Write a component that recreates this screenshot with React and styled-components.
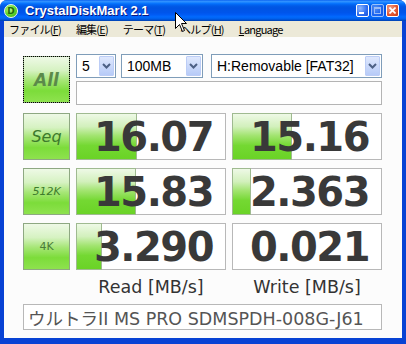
import React from 'react';
import styled, { createGlobalStyle } from 'styled-components';

const GlobalStyle = createGlobalStyle`
  html, body {
    margin: 0;
    padding: 0;
    background: #fff;
  }
  body {
    width: 406px;
    height: 344px;
    overflow: hidden;
    font-family: "DejaVu Sans", "Noto Sans CJK JP", sans-serif;
  }
`;

const Window = styled.div`
  position: relative;
  width: 406px;
  height: 344px;
  display: flex;
  flex-direction: column;
  background: #0842d4;
  border-radius: 7px 7px 0 0;
  overflow: hidden;
`;

const TitleBar = styled.div`
  height: 21px;
  flex: none;
  display: flex;
  align-items: center;
  padding: 0 7px 0 4px;
  background: linear-gradient(#0058ee 0%, #3593ff 5%, #288eff 9%, #127dff 14%, #036ffc 18%, #0262ee 24%, #0057e5 32%, #0054e3 40%, #0055eb 60%, #005bf5 70%, #026afe 80%, #0062ef 88%, #0052d6 94%, #0040ab 100%);
`;

const AppIcon = styled.span`
  width: 12px;
  height: 12px;
  border-radius: 50%;
  border: 1px solid #f0faea;
  background: radial-gradient(circle at 40% 35%, #c8fa9a 0%, #62d82a 50%, #2f9e12 100%);
  display: flex;
  align-items: center;
  justify-content: center;
  font: bold 9px "DejaVu Sans", sans-serif;
  color: #1d6a0e;
`;

const Title = styled.span`
  margin-left: 7px;
  color: #fff;
  font: bold 13px "Liberation Sans", sans-serif;
  text-shadow: 1px 1px 0 #0a1883;
  flex: 1;
`;

const CaptionButtons = styled.div`
  display: flex;
  gap: 2px;
`;

const CaptionButton = styled.span`
  width: 13px;
  height: 13px;
  box-sizing: border-box;
  border: 1px solid #fff;
  border-radius: 2px;
  display: flex;
  align-items: center;
  justify-content: center;
  background: ${p => p.$close
    ? 'radial-gradient(circle at 30% 30%, #f2a08a 0%, #e0542e 60%, #c13a17 100%)'
    : 'radial-gradient(circle at 30% 30%, #8cb6ff 0%, #2c6cf0 60%, #1b52d8 100%)'};
  opacity: ${p => (p.$dim ? 0.6 : 1)};
`;

const MenuBar = styled.div`
  height: 16px;
  flex: none;
  display: flex;
  align-items: center;
  gap: 15px;
  background: #ece9d8;
  margin: 0 4px;
  padding-left: 5px;
  font: 11px "Noto Sans CJK JP", sans-serif;
  letter-spacing: -0.8px;
  color: #000;
`;

const MenuItem = styled.span`
  white-space: nowrap;
  u { text-decoration: underline; }
`;

const Client = styled.div`
  flex: 1;
  margin: 0 4px 6px;
  background: #fcfcfc;
  padding: 17px 20px 0 19px;
  display: grid;
  grid-template-columns: 47px 150px 150px;
  grid-template-rows: 51px 47px 47px 47px 18px 26px;
  column-gap: 6px;
  row-gap: 8px;
  align-content: start;
`;

const GreenButton = styled.div`
  box-sizing: border-box;
  width: 47px;
  height: 47px;
  align-self: center;
  border: 1px solid #8ea882;
  background: linear-gradient(#eef9e6 0%, #d6f2c2 30%, #a6e676 52%, #7cdc3a 75%, #8ee24e 100%);
  display: flex;
  align-items: center;
  justify-content: center;
  color: ${p => p.$color || '#4b7c3a'};
  font-family: "DejaVu Sans", sans-serif;
  font-size: ${p => p.$size || 13}px;
  font-style: ${p => (p.$upright ? 'normal' : 'italic')};
  font-weight: ${p => (p.$bold ? 'bold' : 'normal')};
  outline: ${p => (p.$focus ? '1px dotted #000' : 'none')};
  outline-offset: -1px;
`;

const TopControls = styled.div`
  grid-column: 2 / 4;
  display: flex;
  flex-direction: column;
  justify-content: space-between;
`;

const ComboRow = styled.div`
  display: flex;
  gap: 5px;
`;

const Combo = styled.div`
  box-sizing: border-box;
  width: ${p => p.$w}px;
  height: 24px;
  border: 1px solid #7f9db9;
  background: #fff;
  display: flex;
  align-items: center;
  padding: 1px;
  margin-left: ${p => p.$ml || 0}px;
`;

const ComboText = styled.span`
  flex: 1;
  padding-left: 4px;
  font: 14px "Liberation Sans", sans-serif;
  color: #000;
  white-space: nowrap;
`;

const ComboArrow = styled.span`
  width: 15px;
  align-self: stretch;
  box-sizing: border-box;
  border: 1px solid #bccdf6;
  border-radius: 1px;
  background: linear-gradient(#dfe8fd, #b7cbf8);
  display: flex;
  align-items: center;
  justify-content: center;
`;

const StatusBox = styled.div`
  box-sizing: border-box;
  height: 24px;
  border: 1px solid #b4b4b4;
  background: #fff;
`;

const ResultBox = styled.div`
  position: relative;
  box-sizing: border-box;
  border: 1px solid #b8b8b8;
  background: #fff;
  display: flex;
  align-items: center;
  justify-content: flex-end;
  padding-right: 12px;
`;

const Bar = styled.div`
  position: absolute;
  left: -1px;
  top: -1px;
  bottom: -1px;
  box-sizing: border-box;
  border: 1px solid #9fba90;
  background: linear-gradient(#eef9e6 0%, #d2f0bc 28%, #a2e470 48%, #74d832 70%, #6ad326 100%);
`;

const Value = styled.span`
  position: relative;
  font: bold 40px "DejaVu Sans", sans-serif;
  letter-spacing: -1.5px;
  color: #393939;
  line-height: 1;
`;

const Label = styled.div`
  grid-column: ${p => p.$col};
  text-align: center;
  font: 17.5px "DejaVu Sans", sans-serif;
  color: #333;
  line-height: 18px;
`;

const InfoBox = styled.div`
  grid-column: 1 / 4;
  box-sizing: border-box;
  border: 1px solid #b8b8b8;
  background: #fff;
  display: flex;
  align-items: center;
  padding-left: 4px;
  font: 17.5px "DejaVu Sans", "Noto Sans CJK JP", sans-serif;
  color: #555;
  white-space: nowrap;
  overflow: hidden;
`;

const Cursor = styled.svg`
  position: absolute;
  left: 175px;
  top: 12px;
`;

const Chevron = () => (
  <svg width="9" height="6" viewBox="0 0 9 6">
    <path d="M1 1 L4.5 4.5 L8 1" fill="none" stroke="#4d6185" strokeWidth="2" />
  </svg>
);

const rows = [
  { name: 'Seq', read: '16.07', write: '15.16', rw: 61, ww: 60, size: 16, color: '#3d7a2c' },
  { name: '512K', read: '15.83', write: '2.363', rw: 60, ww: 19, size: 11, color: '#3d7a2c' },
  { name: '4K', read: '3.290', write: '0.021', rw: 26, ww: 0, size: 11, color: '#4b7c3a', upright: true },
];

export default function App() {
  return (
    <>
      <GlobalStyle />
      <Window>
        <TitleBar>
          <AppIcon>D</AppIcon>
          <Title>CrystalDiskMark 2.1</Title>
          <CaptionButtons>
            <CaptionButton>
              <svg width="7" height="7" viewBox="0 0 7 7"><rect x="0" y="5" width="5" height="2" fill="#fff" /></svg>
            </CaptionButton>
            <CaptionButton $dim>
              <svg width="7" height="7" viewBox="0 0 7 7"><rect x="0.5" y="0.5" width="6" height="6" fill="none" stroke="#fff" /><rect x="0" y="0" width="7" height="2" fill="#fff" /></svg>
            </CaptionButton>
            <CaptionButton $close>
              <svg width="7" height="7" viewBox="0 0 7 7"><path d="M0.5 0.5 L6.5 6.5 M6.5 0.5 L0.5 6.5" stroke="#fff" strokeWidth="1.6" /></svg>
            </CaptionButton>
          </CaptionButtons>
        </TitleBar>
        <MenuBar>
          <MenuItem>ファイル(<u>F</u>)</MenuItem>
          <MenuItem>編集(<u>E</u>)</MenuItem>
          <MenuItem>テーマ(<u>T</u>)</MenuItem>
          <MenuItem>ヘルプ(<u>H</u>)</MenuItem>
          <MenuItem>
            <u>L</u>anguage
          </MenuItem>
        </MenuBar>
        <Client>
          <GreenButton $focus $bold $size={17} $color="#5b8a4a">All</GreenButton>
          <TopControls>
            <ComboRow>
              <Combo $w={40}>
                <ComboText>5</ComboText>
                <ComboArrow><Chevron /></ComboArrow>
              </Combo>
              <Combo $w={82}>
                <ComboText>100MB</ComboText>
                <ComboArrow><Chevron /></ComboArrow>
              </Combo>
              <Combo $w={171} $ml={3}>
                <ComboText>H:Removable [FAT32]</ComboText>
                <ComboArrow><Chevron /></ComboArrow>
              </Combo>
            </ComboRow>
            <StatusBox />
          </TopControls>
          {rows.map(r => (
            <React.Fragment key={r.name}>
              <GreenButton $size={r.size} $color={r.color} $upright={r.upright}>{r.name}</GreenButton>
              <ResultBox>
                {r.rw > 0 && <Bar style={{ width: r.rw }} />}
                <Value>{r.read}</Value>
              </ResultBox>
              <ResultBox>
                {r.ww > 0 && <Bar style={{ width: r.ww }} />}
                <Value>{r.write}</Value>
              </ResultBox>
            </React.Fragment>
          ))}
          <Label $col="2">Read [MB/s]</Label>
          <Label $col="3">Write [MB/s]</Label>
          <InfoBox>ウルトラII MS PRO SDMSPDH-008G-J61</InfoBox>
        </Client>
        <Cursor width="13" height="21" viewBox="0 0 13 21">
          <path d="M0.5 0.5 L0.5 16.5 L4.5 12.5 L7.5 19.5 L9.5 18.5 L6.5 11.5 L11.5 11.5 Z" fill="#fff" stroke="#000" strokeWidth="1" />
        </Cursor>
      </Window>
    </>
  );
}
